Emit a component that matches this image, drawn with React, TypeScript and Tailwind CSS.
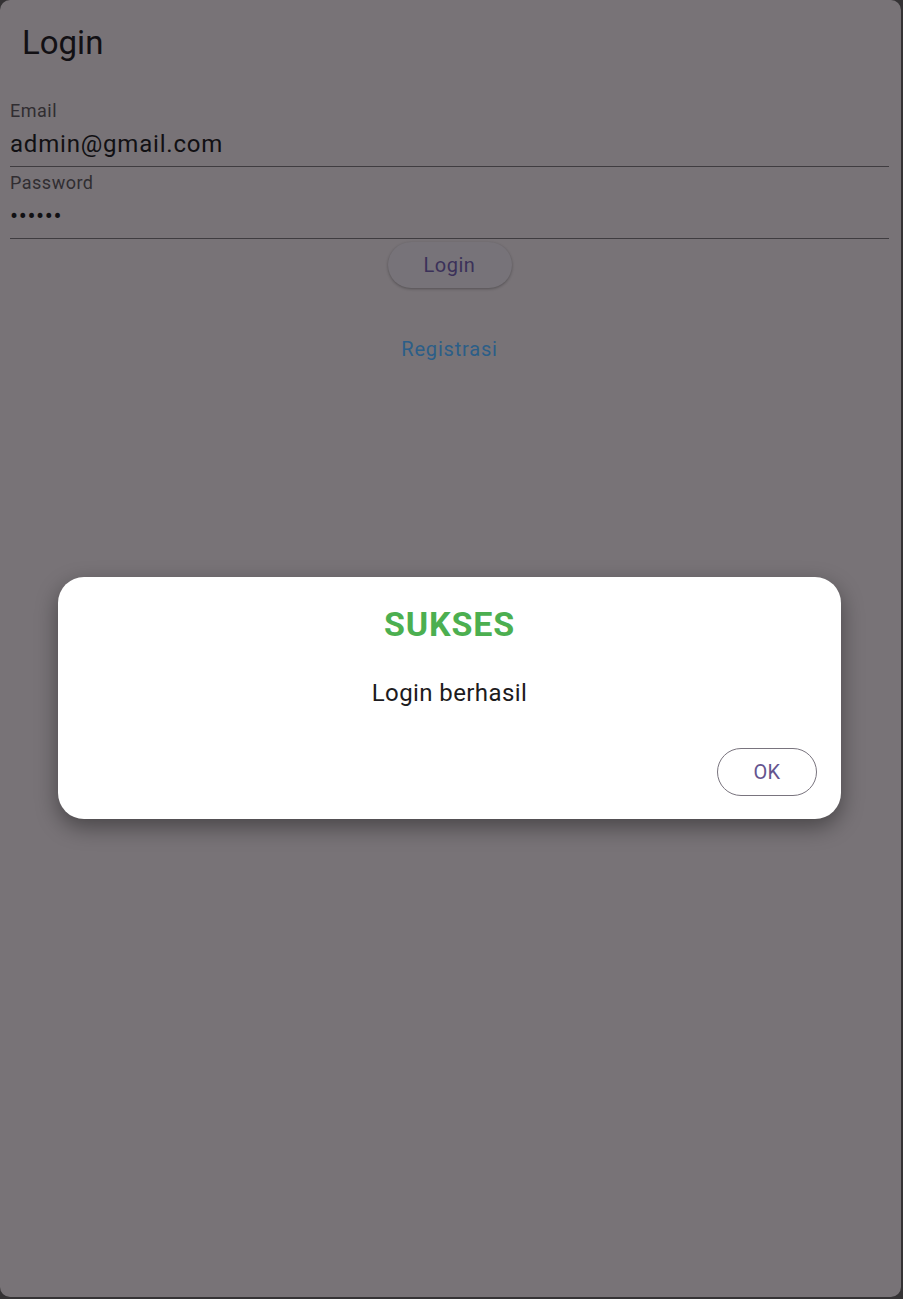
import React from "react";

const font = { fontFamily: "Roboto, 'Noto Sans', sans-serif" };

function Field({ label, value, dots }: { label: string; value: string; dots?: boolean }) {
  return (
    <div className="border-b border-[#3f3c40]">
      <div className="text-[18px] leading-none tracking-[0.5px] text-[#302d31]">{label}</div>
      <div
        className={
          "mt-[12px] pb-[10px] text-[24px] leading-none text-[#111013] " +
          (dots ? "tracking-[0.6px]" : "tracking-[0.8px]")
        }
      >
        {value}
      </div>
    </div>
  );
}

function SuccessDialog() {
  return (
    <div className="absolute left-[58px] right-[60px] top-[577px] rounded-[26px] bg-white pt-[30px] pb-[23px] shadow-[0_8px_22px_rgba(0,0,0,0.4)]">
      <div className="text-center text-[34px] font-bold leading-none tracking-[0.8px] text-[#4caf50]">SUKSES</div>
      <div className="mt-[40px] text-center text-[24px] leading-none tracking-[0.4px] text-[#1d1b20]">
        Login berhasil
      </div>
      <div className="mt-[43px] flex justify-end pr-[24px]">
        <button className="h-[48px] w-[100px] rounded-full border border-[#79747e] text-[20px] tracking-[0.4px] text-[#65558f]">
          OK
        </button>
      </div>
    </div>
  );
}

export default function App() {
  return (
    <div className="h-[1299px] w-[903px] bg-[#343234] pr-[2px] pb-[2px]" style={font}>
      <div className="relative flex h-full flex-col overflow-hidden rounded-[10px] bg-[#787377]">
        <div className="ml-[22px] mt-[26px] text-[33px] leading-none text-[#121014]">Login</div>
        <div className="mt-[43px] flex flex-col pl-[10px] pr-[12px]">
          <Field label="Email" value="admin@gmail.com" />
          <div className="mt-[7px]">
            <Field label="Password" value="••••••" dots />
          </div>
          <div className="mt-[3px] flex justify-center">
            <button className="h-[46px] w-[124px] rounded-full bg-[#777379] text-[20px] tracking-[0.5px] text-[#3b3159] shadow-[0_1px_3px_rgba(0,0,0,0.3)]">
              Login
            </button>
          </div>
          <div className="mt-[51px] text-center text-[20px] leading-none tracking-[0.8px] text-[#2b5e88]">
            Registrasi
          </div>
        </div>
        <SuccessDialog />
      </div>
    </div>
  );
}
